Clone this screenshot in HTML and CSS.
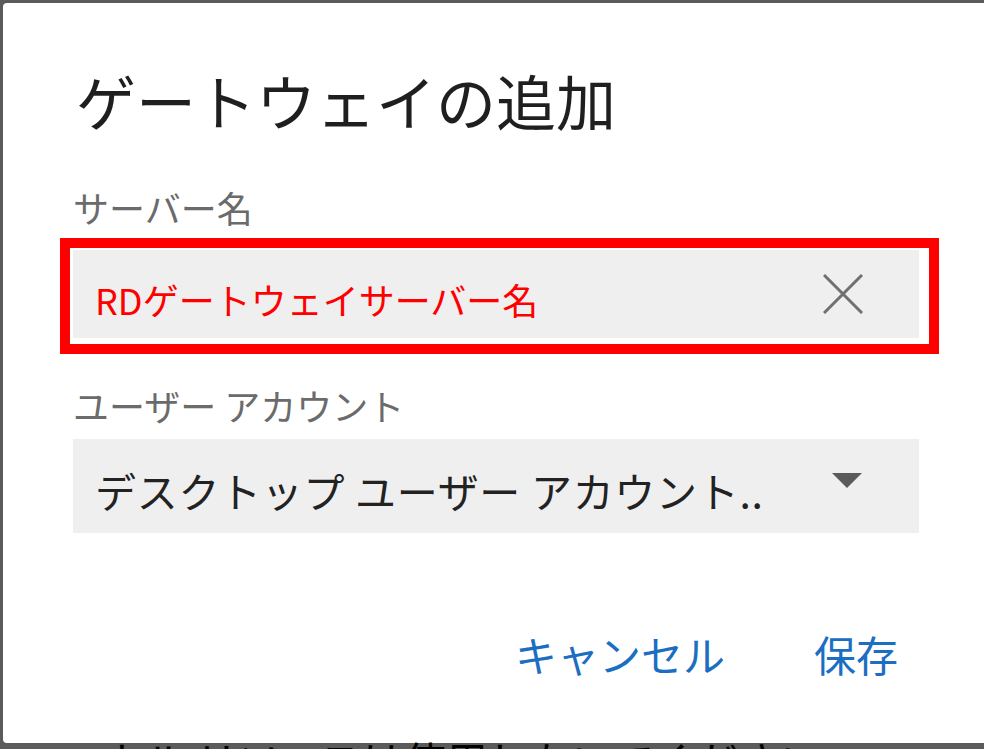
FILE: index.html
```html
<!DOCTYPE html>
<html lang="ja">
<head>
    <meta charset="UTF-8">
    <meta name="viewport" content="width=device-width, initial-scale=1.0">
    <title>ゲートウェイの追加</title>
    <link rel="stylesheet" href="styles.css">
</head>
<body>
    <div class="dialog">
        <h1 class="title">ゲートウェイの追加</h1>

        <label class="label" for="serverName">サーバー名</label>
        <div class="field field-input">
            <span class="field-text field-red" id="serverName">RDゲートウェイサーバー名</span>
            <svg class="clear-icon" width="40" height="40" viewBox="0 0 40 40">
                <path d="M1 1 L39 39 M39 1 L1 39" stroke="#707070" stroke-width="3" fill="none"/>
            </svg>
            <div class="highlight"></div>
        </div>

        <label class="label">ユーザー アカウント</label>
        <div class="field field-select">
            <span class="field-text">デスクトップ ユーザー アカウント..</span>
            <svg class="caret" width="30" height="15" viewBox="0 0 30 15">
                <path d="M0 0 L30 0 L15 15 Z" fill="#5a5a5a"/>
            </svg>
        </div>

        <div class="actions">
            <button type="button">キャンセル</button>
            <button type="button">保存</button>
        </div>
    </div>
    <p class="behind">ロ ーカル リソースは使用しないでください</p>
</body>
</html>
```

FILE: styles.css
```css
html, body {
    margin: 0;
    padding: 0;
}
body {
    background-color: #5b5b5b;
    font-family: "Noto Sans CJK JP", "Noto Sans", sans-serif;
    padding: 3px 0 0 3px;
    height: 749px;
    box-sizing: border-box;
    overflow: hidden;
}
.dialog {
    background: #fff;
    width: 1000px;
    height: 740px;
    box-sizing: border-box;
    padding: 67px 0 0 67px;
    border-radius: 4px 0 0 4px;
}
.title {
    margin: 0;
    font-size: 60px;
    font-weight: normal;
    line-height: 1;
    color: #1f1f1f;
    padding-left: 6px;
}
.label {
    display: block;
    margin-top: 59px;
    font-size: 36px;
    line-height: 1;
    color: #6b6b6b;
    padding-left: 3px;
}
.field {
    position: relative;
    width: 846px;
    margin-left: 3px;
    background: #efefef;
    display: flex;
    align-items: center;
    justify-content: space-between;
    box-sizing: border-box;
    padding-left: 22px;
}
.field-input {
    height: 88px;
    margin-top: 25px;
    padding-right: 56px;
}
.field-select {
    height: 94px;
    margin-top: 16px;
    padding-right: 57px;
}
.field-input + .label {
    margin-top: 49px;
}
.field-text {
    font-size: 41px;
    line-height: 1;
    padding-top: 8px;
    letter-spacing: 0.7px;
    color: #222;
}
.field-input .field-text {
    font-size: 36px;
    padding-top: 10px;
    letter-spacing: 0;
}
.field-red {
    color: #ff0000;
}
.clear-icon {
    display: block;
}
.caret {
    display: block;
    margin-bottom: 11px;
}
.highlight {
    position: absolute;
    left: -13px;
    right: -20px;
    top: -12px;
    bottom: -16px;
    border: 10px solid #ff0000;
}
.actions {
    display: flex;
    justify-content: flex-end;
    gap: 89px;
    width: 849px;
    box-sizing: border-box;
    padding-right: 21px;
    margin-top: 100px;
}
.actions button {
    background: none;
    border: none;
    padding: 0;
    font-family: inherit;
    font-size: 42px;
    line-height: 1;
    color: #1b6ec2;
    cursor: pointer;
}
.behind {
    margin: 0;
    font-size: 42px;
    line-height: 0.8;
    color: #000;
    padding-left: 6px;
    white-space: nowrap;
}
```
